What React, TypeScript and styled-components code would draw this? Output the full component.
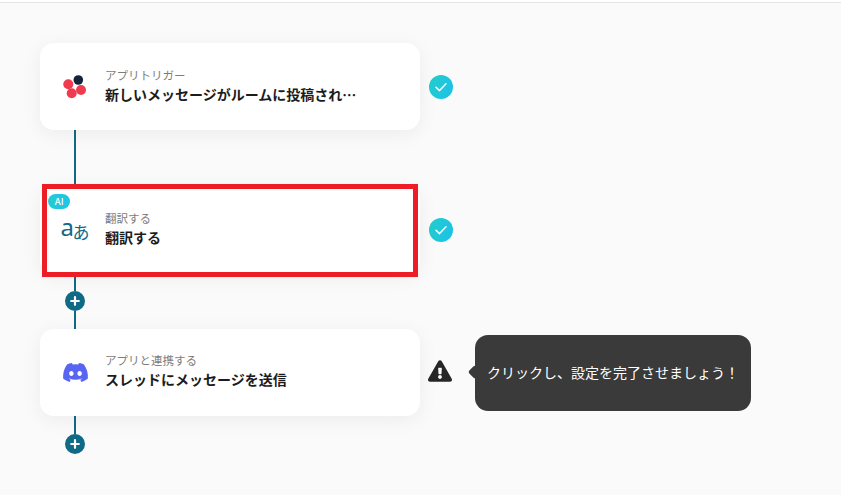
import React from "react";
import styled, { createGlobalStyle } from "styled-components";
import { FaDiscord, FaExclamationTriangle } from "react-icons/fa";

const Global = createGlobalStyle`
  html, body { margin: 0; padding: 0; background: #fafafa; }
  body { font-family: "Noto Sans CJK JP", "Noto Sans", sans-serif; overflow: hidden; }
`;

const Page = styled.div`
  width: 841px;
  height: 495px;
  box-sizing: border-box;
  background: #fafafa;
  overflow: hidden;
`;
const TopBar = styled.div`
  height: 2px;
  background: #fff;
  border-bottom: 1px solid #e5e5e5;
`;
const Flow = styled.div`
  display: flex;
  flex-direction: column;
  padding: 40px 0 0 40px;
`;
const Row = styled.div`
  display: flex;
  align-items: center;
  height: 87px;
`;
const Card = styled.div`
  position: relative;
  width: 380px;
  height: 87px;
  box-sizing: border-box;
  display: flex;
  align-items: center;
  padding: 0 20px 0 20px;
  background: #fff;
  border-radius: 14px;
  box-shadow: 0 4px 20px rgba(0, 0, 0, 0.06);
`;
const Highlight = styled.div`
  position: absolute;
  left: 2px;
  top: -2px;
  width: 376px;
  height: 93px;
  box-sizing: border-box;
  border: 5px solid #ee1c25;
  pointer-events: none;
`;
const AiBadge = styled.span`
  position: absolute;
  left: 8px;
  top: 8px;
  width: 22px;
  height: 15px;
  border-radius: 8px;
  background: linear-gradient(90deg, #22cdd0, #1fc4e8);
  color: #fff;
  font-family: "Inter", sans-serif;
  font-size: 9px;
  font-weight: 500;
  line-height: 15px;
  text-align: center;
  z-index: 1;
`;
const IconBox = styled.div`
  width: 30px;
  height: 30px;
  flex: none;
  display: flex;
  align-items: center;
  justify-content: center;
  margin-right: 15px;
`;
const DiscordIcon = styled(FaDiscord)`
  width: 27px;
  height: 27px;
  color: #5865f2;
`;
const TranslateGlyphs = styled.div`
  display: flex;
  align-items: flex-start;
  color: #0f6a85;
  line-height: 1;
  margin-top: 1px;
`;
const LatinGlyph = styled.span`
  font-family: "Noto Sans", sans-serif;
  font-size: 24px;
  font-weight: 400;
  line-height: 22px;
  margin-top: -3px;
  letter-spacing: -1.5px;
`;
const KanaGlyph = styled.span`
  font-size: 17px;
  font-weight: 400;
  line-height: 18px;
  margin-top: 4px;
`;
const Texts = styled.div<{ $up?: boolean }>`
  display: flex;
  flex-direction: column;
  min-width: 0;
  margin-top: ${(p) => (p.$up ? -3 : -1)}px;
`;
const Label = styled.div`
  font-size: 11.5px;
  line-height: 16px;
  color: #7d7d7d;
`;
const Title = styled.div`
  font-size: 14px;
  line-height: 22px;
  font-weight: 700;
  color: #1c1c1c;
  white-space: nowrap;
`;
const Status = styled.div`
  width: 24px;
  height: 24px;
  margin-left: 9px;
  border-radius: 50%;
  background: linear-gradient(110deg, #22cfca, #1cc0ea);
  display: flex;
  align-items: center;
  justify-content: center;
`;
const WarnIcon = styled(FaExclamationTriangle)`
  width: 24px;
  height: 22px;
  margin-left: 8px;
  margin-top: -3px;
  flex: none;
  color: #262626;
`;
const Tooltip = styled.div`
  position: relative;
  width: 276px;
  height: 76px;
  margin: 1px 0 0 23px;
  box-sizing: border-box;
  padding: 0 12px 3px;
  display: flex;
  align-items: center;
  background: #3a3a3a;
  border-radius: 13px;
  color: #fff;
  font-size: 14px;
  &::before {
    content: "";
    position: absolute;
    left: -5px;
    top: 32px;
    width: 10px;
    height: 10px;
    background: #3a3a3a;
    border-radius: 2px;
    transform: rotate(45deg);
  }
`;
const Connector = styled.div<{ $h: number }>`
  width: 20px;
  height: ${(p) => p.$h}px;
  margin-left: 25px;
  display: flex;
  flex-direction: column;
  align-items: center;
`;
const Line = styled.div`
  width: 2px;
  flex: 1;
  background: #0f6a85;
`;
const Plus = styled.button`
  width: 20px;
  height: 20px;
  flex: none;
  padding: 0;
  border: none;
  border-radius: 50%;
  background: #0f6a85;
  display: flex;
  align-items: center;
  justify-content: center;
`;

const Check = () => (
  <svg width="14" height="14" viewBox="0 0 14 14" fill="none">
    <path d="M2 7.2 5.6 10.6 12 3.8" stroke="#fff" strokeWidth="1.5" strokeLinecap="round" strokeLinejoin="round" />
  </svg>
);
const PlusIcon = () => (
  <svg width="10" height="10" viewBox="0 0 10 10" fill="none">
    <path d="M5 1.2v7.6M1.2 5h7.6" stroke="#fff" strokeWidth="2.2" strokeLinecap="round" />
  </svg>
);
const Petals = () => (
  <svg width="30" height="30" viewBox="0 0 30 30">
    <circle cx="8.3" cy="12.3" r="5" fill="#ee3b4e" />
    <circle cx="21" cy="18" r="5" fill="#ee3b4e" />
    <circle cx="11.7" cy="21.3" r="5" fill="#ee3b4e" />
    <circle cx="18.3" cy="8" r="4.8" fill="#14233c" />
  </svg>
);

export default function App() {
  return (
    <Page>
      <Global />
      <TopBar />
      <Flow>
        <Row>
          <Card>
            <IconBox>
              <Petals />
            </IconBox>
            <Texts>
              <Label>アプリトリガー</Label>
              <Title>新しいメッセージがルームに投稿され…</Title>
            </Texts>
          </Card>
          <Status>
            <Check />
          </Status>
        </Row>
        <Connector $h={56}>
          <Line />
        </Connector>
        <Row>
          <Card>
            <AiBadge>AI</AiBadge>
            <Highlight />
            <IconBox>
              <TranslateGlyphs>
                <LatinGlyph>a</LatinGlyph>
                <KanaGlyph>あ</KanaGlyph>
              </TranslateGlyphs>
            </IconBox>
            <Texts>
              <Label>翻訳する</Label>
              <Title>翻訳する</Title>
            </Texts>
          </Card>
          <Status>
            <Check />
          </Status>
        </Row>
        <Connector $h={56}>
          <Line />
          <Plus>
            <PlusIcon />
          </Plus>
          <Line />
        </Connector>
        <Row>
          <Card>
            <IconBox>
              <DiscordIcon />
            </IconBox>
            <Texts $up>
              <Label>アプリと連携する</Label>
              <Title>スレッドにメッセージを送信</Title>
            </Texts>
          </Card>
          <WarnIcon />
          <Tooltip>クリックし、設定を完了させましょう！</Tooltip>
        </Row>
        <Connector $h={38}>
          <Line />
          <Plus>
            <PlusIcon />
          </Plus>
        </Connector>
      </Flow>
    </Page>
  );
}
